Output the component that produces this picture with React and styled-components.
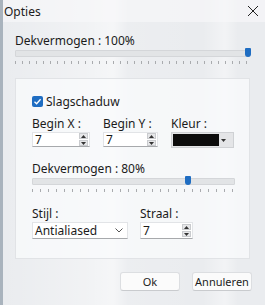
import React from "react";
import styled, { createGlobalStyle } from "styled-components";

const GlobalStyle = createGlobalStyle`
  html, body {
    margin: 0;
    padding: 0;
    background: #e9ecef;
  }
  body {
    font-family: "Noto Sans", "Open Sans", sans-serif;
    font-size: 12px;
    color: #1b1b1b;
  }
`;

const Window = styled.div`
  width: 265px;
  height: 305px;
  box-sizing: border-box;
  border-left: 3px solid #a9b3bd;
  background:
    linear-gradient(
      90deg,
      rgba(255, 255, 255, 0) 0px,
      rgba(255, 255, 255, 0.35) 85px,
      rgba(255, 255, 255, 0.55) 110px,
      rgba(255, 255, 255, 0.1) 125px,
      rgba(255, 255, 255, 0) 200px,
      rgba(255, 255, 255, 0.4) 222px,
      rgba(255, 255, 255, 0) 235px
    ),
    #eaecef;
  display: flex;
  flex-direction: column;
  overflow: hidden;
`;

const TitleBar = styled.div`
  height: 22px;
  display: flex;
  align-items: center;
  justify-content: space-between;
  padding: 0 6px 0 1px;
  background: rgba(248, 249, 250, 0.6);
`;

const Title = styled.span`
  font-size: 12px;
`;

const Close = styled.span`
  width: 12px;
  height: 12px;
  display: flex;
`;

const Body = styled.div`
  padding: 12px 12px 0 12px;
  display: flex;
  flex-direction: column;
  flex: 1;
`;

const Label = styled.div`
  font-size: 12px;
  line-height: 14px;
  white-space: nowrap;
  margin-top: ${(p) => p.mt || 0}px;
`;

const SliderWrap = styled.div`
  width: ${(p) => p.w}px;
  display: flex;
  flex-direction: column;
`;

const Track = styled.div`
  position: relative;
  height: 5px;
  margin-top: 2px;
  background: #e2e4e6;
  border: 1px solid #d4d6d9;
  border-radius: 1px;
`;

const Thumb = styled.div`
  position: absolute;
  top: -3px;
  width: 6px;
  height: 9px;
  background: #1f6dc2;
  border-radius: 1px 1px 3px 3px;
`;

const Ticks = styled.div`
  height: 3px;
  margin-top: 4px;
  background: repeating-linear-gradient(
    90deg,
    #a9abae 0px,
    #a9abae 1px,
    transparent 1px,
    transparent ${(p) => p.step}px
  );
`;

const Panel = styled.div`
  margin-top: 14px;
  width: 235px;
  height: 181px;
  box-sizing: border-box;
  background: rgba(250, 251, 252, 0.75);
  border: 1px solid #e1e3e6;
  padding: 15px 0 0 16px;
  display: flex;
  flex-direction: column;
`;

const CheckRow = styled.label`
  display: flex;
  align-items: center;
  gap: 3px;
  height: 14px;
`;

const CheckBox = styled.span`
  width: 11px;
  height: 11px;
  border-radius: 2px;
  background: #1f6dc2;
  display: flex;
  align-items: center;
  justify-content: center;
`;

const Row = styled.div`
  display: flex;
  gap: ${(p) => p.gap}px;
  margin-top: ${(p) => p.mt}px;
`;

const Field = styled.div`
  display: flex;
  flex-direction: column;
  gap: 1px;
`;

const Input = styled.div`
  width: ${(p) => p.w}px;
  height: ${(p) => p.h || 15}px;
  box-sizing: border-box;
  background: #ffffff;
  border: 1px solid #e2e4e7;
  border-bottom-color: #a7a9ac;
  display: flex;
  align-items: center;
  padding-left: 2px;
`;

const InputText = styled.span`
  flex: 1;
  font-size: 12px;
`;

const Spin = styled.div`
  width: 9px;
  height: 13px;
  margin-right: 1px;
  display: flex;
  flex-direction: column;
  gap: 1px;
`;

const SpinBtn = styled.span`
  flex: 1;
  background: #e6e7e9;
  border: 1px solid #c9cbce;
  display: flex;
  align-items: center;
  justify-content: center;
`;

const ColorPick = styled.div`
  width: 63px;
  height: 16px;
  box-sizing: border-box;
  background: #e4e5e7;
  border: 1px solid #cfd1d4;
  display: flex;
  align-items: center;
  padding: 1px;
  gap: 2px;
`;

const Swatch = styled.span`
  width: 46px;
  height: 12px;
  background: #0c0c0c;
`;

const Select = styled.div`
  width: 96px;
  height: 17px;
  box-sizing: border-box;
  background: #ffffff;
  border: 1px solid #e2e4e7;
  border-bottom-color: #a7a9ac;
  display: flex;
  align-items: center;
  justify-content: space-between;
  padding: 0 4px 0 2px;
`;

const Footer = styled.div`
  display: flex;
  justify-content: flex-end;
  gap: 12px;
  padding: 13px 0 0 0;
  width: 237px;
`;

const Button = styled.div`
  width: 60px;
  height: 19px;
  box-sizing: border-box;
  background: #fbfbfb;
  border: 1px solid #dcdee1;
  border-bottom-color: #c9cbce;
  border-radius: 3px;
  display: flex;
  align-items: center;
  justify-content: center;
  font-size: 11px;
`;

const Up = () => (
  <svg width="5" height="3" viewBox="0 0 5 3">
    <path d="M0 3 L2.5 0 L5 3 Z" fill="#333" />
  </svg>
);

const Down = () => (
  <svg width="5" height="3" viewBox="0 0 5 3">
    <path d="M0 0 L2.5 3 L5 0 Z" fill="#333" />
  </svg>
);

const Spinner = () => (
  <Spin>
    <SpinBtn>
      <Up />
    </SpinBtn>
    <SpinBtn>
      <Down />
    </SpinBtn>
  </Spin>
);

const NumberBox = ({ w, h, value }) => (
  <Input w={w} h={h}>
    <InputText>{value}</InputText>
    <Spinner />
  </Input>
);

const Slider = ({ w, pos, step }) => (
  <SliderWrap w={w}>
    <Track>
      <Thumb style={{ left: pos }} />
    </Track>
    <Ticks step={step} />
  </SliderWrap>
);

export default function App() {
  return (
    <>
      <GlobalStyle />
      <Window>
        <TitleBar>
          <Title>Opties</Title>
          <Close>
            <svg width="12" height="12" viewBox="0 0 12 12">
              <path d="M1 1 L11 11 M11 1 L1 11" stroke="#222" strokeWidth="1" />
            </svg>
          </Close>
        </TitleBar>
        <Body>
          <Label>Dekvermogen : 100%</Label>
          <Slider w={235} pos={229} step={7} />
          <Panel>
            <CheckRow>
              <CheckBox>
                <svg width="9" height="9" viewBox="0 0 9 9">
                  <path d="M1.5 4.8 L3.6 6.8 L7.6 2.2" stroke="#fff" strokeWidth="1.3" fill="none" />
                </svg>
              </CheckBox>
              <span>Slagschaduw</span>
            </CheckRow>
            <Row gap={13} mt={9}>
              <Field>
                <Label>Begin X :</Label>
                <NumberBox w={58} value="7" />
              </Field>
              <Field>
                <Label>Begin Y :</Label>
                <NumberBox w={55} value="7" />
              </Field>
              <Field>
                <Label>Kleur :</Label>
                <ColorPick>
                  <Swatch />
                  <Down />
                </ColorPick>
              </Field>
            </Row>
            <Label mt={14}>Dekvermogen : 80%</Label>
            <Slider w={203} pos={152} step={8} />
            <Row gap={12} mt={15}>
              <Field>
                <Label>Stijl :</Label>
                <Select>
                  <span>Antialiased</span>
                  <svg width="8" height="5" viewBox="0 0 8 5">
                    <path d="M0.5 0.5 L4 4 L7.5 0.5" stroke="#555" fill="none" />
                  </svg>
                </Select>
              </Field>
              <Field>
                <Label>Straal :</Label>
                <NumberBox w={53} h={17} value="7" />
              </Field>
            </Row>
          </Panel>
          <Footer>
            <Button>Ok</Button>
            <Button>Annuleren</Button>
          </Footer>
        </Body>
      </Window>
    </>
  );
}
